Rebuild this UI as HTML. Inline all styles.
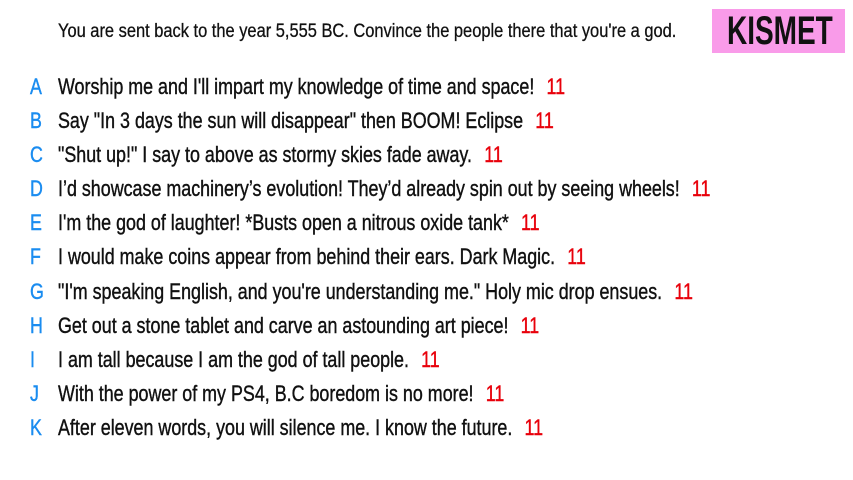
<!DOCTYPE html>
<html><head><meta charset="utf-8"><style>
body{margin:0;width:853px;height:480px;background:#fff;position:relative;overflow:hidden;font-family:"Liberation Sans",sans-serif;color:#111;}
.t{position:absolute;left:58px;top:21px;font-size:19px;white-space:nowrap;transform:scaleX(0.865);transform-origin:0 0;-webkit-text-stroke:0.3px #111}
.k{position:absolute;left:712px;top:9px;width:133px;height:44px;background:#f99be9;}
.k span{position:absolute;left:15px;top:0;font-size:40px;line-height:44px;font-weight:bold;color:#111;transform:scaleX(0.70);transform-origin:0 0;white-space:nowrap}
.r{position:absolute;left:0;height:34px;line-height:34px;font-size:22px;white-space:nowrap;-webkit-text-stroke:0.4px currentColor}
.r b{position:absolute;left:30px;color:#1a8cf0;font-weight:normal;transform:scaleX(0.81);transform-origin:0 0}
.r span{position:absolute;left:58px;transform:scaleX(0.813);transform-origin:0 0}
.r i{font-style:normal;color:#e8000b;margin-left:15px}
</style></head><body>
<div class="t">You are sent back to the year 5,555 BC. Convince the people there that you're a god.</div>
<div class="k"><span>KISMET</span></div>
<div class="r" style="top:70px"><b>A</b><span>Worship me and I'll impart my knowledge of time and space!<i>11</i></span></div>
<div class="r" style="top:104px"><b>B</b><span>Say "In 3 days the sun will disappear" then BOOM! Eclipse<i>11</i></span></div>
<div class="r" style="top:138px"><b>C</b><span>"Shut up!" I say to above as stormy skies fade away.<i>11</i></span></div>
<div class="r" style="top:172px"><b>D</b><span>I’d showcase machinery’s evolution! They’d already spin out by seeing wheels!<i>11</i></span></div>
<div class="r" style="top:206px"><b>E</b><span>I'm the god of laughter! *Busts open a nitrous oxide tank*<i>11</i></span></div>
<div class="r" style="top:240px"><b>F</b><span>I would make coins appear from behind their ears. Dark Magic.<i>11</i></span></div>
<div class="r" style="top:275px"><b>G</b><span>"I'm speaking English, and you're understanding me." Holy mic drop ensues.<i>11</i></span></div>
<div class="r" style="top:309px"><b>H</b><span>Get out a stone tablet and carve an astounding art piece!<i>11</i></span></div>
<div class="r" style="top:343px"><b>I</b><span>I am tall because I am the god of tall people.<i>11</i></span></div>
<div class="r" style="top:377px"><b>J</b><span>With the power of my PS4, B.C boredom is no more!<i>11</i></span></div>
<div class="r" style="top:411px"><b>K</b><span>After eleven words, you will silence me. I know the future.<i>11</i></span></div>
</body></html>
